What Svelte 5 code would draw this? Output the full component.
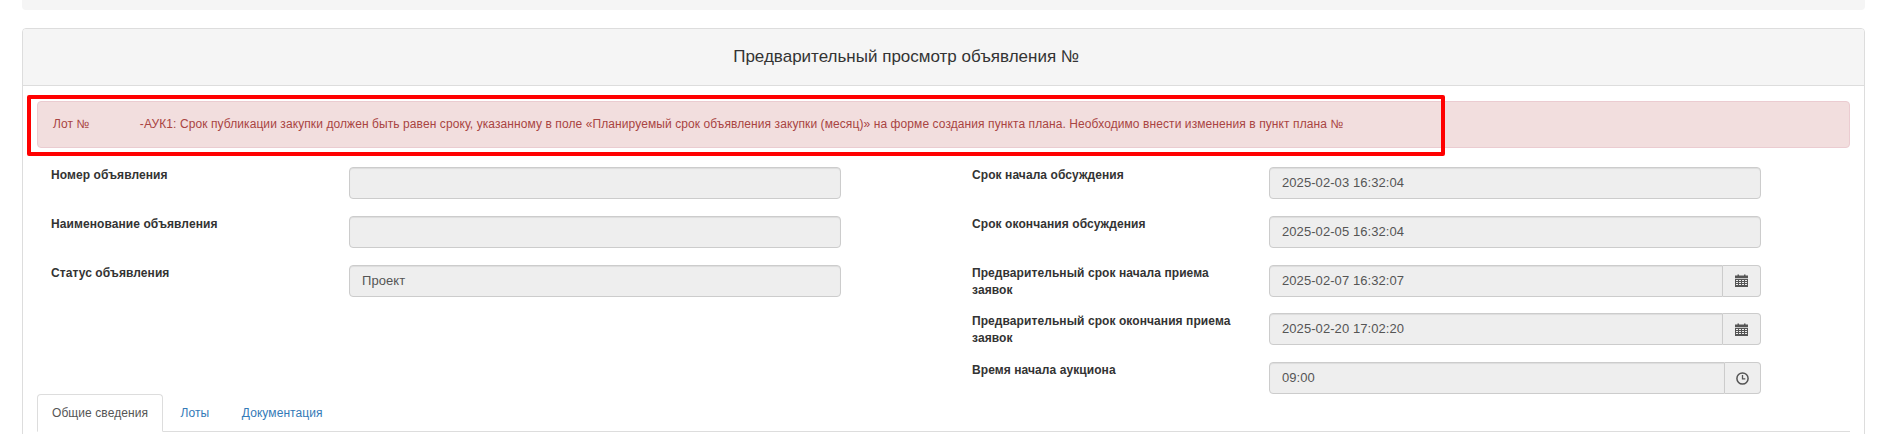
<script>
	const leftFields = [
		{ label: 'Номер объявления', value: '' },
		{ label: 'Наименование объявления', value: '' },
		{ label: 'Статус объявления', value: 'Проект' }
	]

	const rightFields = [
		{ label: 'Срок начала обсуждения', value: '2025-02-03 16:32:04' },
		{ label: 'Срок окончания обсуждения', value: '2025-02-05 16:32:04' },
		{ label: 'Предварительный срок начала приема заявок', value: '2025-02-07 16:32:07', addon: 'calendar' },
		{ label: 'Предварительный срок окончания приема заявок', value: '2025-02-20 17:02:20', addon: 'calendar' },
		{ label: 'Время начала аукциона', value: '09:00', addon: 'time' }
	]
</script>

{#snippet field(item)}
	<div class="field">
		<div class="field-label">{item.label}</div>
		<div class="input-group">
			<div class="input">{item.value}</div>
			{#if item.addon === 'calendar'}
				<span class="addon">
					<svg width="13" height="13" viewBox="0 0 13 13" aria-hidden="true">
						<path fill="#555" d="M0 1.5h2.5V.5h1.5v1h5v-1h1.5v1H13V4H0z" />
						<path fill="#555" fill-rule="evenodd" d="M0 4.8h13V13H0zM1 6v1h2V6zm3 0v1h2V6zm3 0v1h2V6zm3 0v1h2V6zM1 8v1h2V8zm3 0v1h2V8zm3 0v1h2V8zm3 0v1h2V8zM1 10v1h2v-1zm3 0v1h2v-1zm3 0v1h2v-1zm3 0v1h2v-1z" />
					</svg>
				</span>
			{:else if item.addon === 'time'}
				<span class="addon addon-time">
					<svg width="13" height="13" viewBox="0 0 13 13" aria-hidden="true">
						<circle cx="6.5" cy="6.5" r="5.6" fill="none" stroke="#555" stroke-width="1.5" />
						<path fill="none" stroke="#555" stroke-width="1.3" d="M6.5 3v3.8h2.8" />
					</svg>
				</span>
			{/if}
		</div>
	</div>
{/snippet}

<div class="page">
	<div class="well"></div>

	<section class="panel">
		<header class="panel-heading">
			<h3>Предварительный просмотр объявления № <span class="hidden-title"></span></h3>
		</header>

		<div class="panel-body">
			<div class="alert-wrap">
				<div class="alert">
					Лот № <span class="hidden-lot"></span>-АУК1: Срок публикации закупки должен быть равен сроку, указанному в поле «Планируемый срок объявления закупки (месяц)» на форме создания пункта плана. Необходимо внести изменения в пункт плана №
				</div>
				<div class="highlight"></div>
			</div>

			<div class="form">
				<div class="form-col">
					{#each leftFields as item}
						{@render field(item)}
					{/each}
				</div>
				<div class="form-col">
					{#each rightFields as item}
						{@render field(item)}
					{/each}
				</div>
			</div>

			<ul class="tabs">
				<li class="active"><span>Общие сведения</span></li>
				<li><span>Лоты</span></li>
				<li><span>Документация</span></li>
			</ul>
			<div class="tab-content"></div>
		</div>
	</section>
</div>

<style>
:global(body) {
	overflow: hidden;
	background: #fff;
}

.page {
	font-family: "Liberation Sans", Arial, sans-serif;
	font-size: 12px;
	line-height: 17px;
	color: #333;
	padding: 0 17px 0 22px;
	height: 434px;
	overflow: hidden;
}

.well {
	height: 9.5px;
	margin-bottom: 18.5px;
	background: #f5f5f5;
	border-radius: 0 0 4px 4px;
}

.panel {
	border: 1px solid #ddd;
	border-radius: 4px;
}

.panel-heading {
	height: 56px;
	display: flex;
	align-items: center;
	justify-content: center;
	background: #f5f5f5;
	border-bottom: 1px solid #ddd;
	border-radius: 3px 3px 0 0;
}

h3 {
	margin: 0;
	font-size: 17px;
	font-weight: 400;
	line-height: 18px;
	color: #333;
}

.hidden-title {
	display: inline-block;
	width: 70px;
}

.panel-body {
	padding: 15px 14px;
}

.alert-wrap {
	position: relative;
	margin-bottom: 19px;
}

.alert {
	padding: 14px 15px;
	background: #f2dede;
	border: 1px solid #ebccd1;
	border-radius: 4px;
	color: #a94442;
	letter-spacing: 0.087px;
}

.hidden-lot {
	display: inline-block;
	width: 47px;
}

.highlight {
	position: absolute;
	left: -10px;
	top: -6px;
	width: 1418px;
	height: 61px;
	box-sizing: border-box;
	border: 4px solid #f00;
	border-radius: 2px;
}

.form {
	display: grid;
	grid-template-columns: 921px 1fr;
	padding-left: 14px;
	margin-bottom: -16.75px;
}

.field {
	display: grid;
	grid-template-columns: 298px 492px;
	height: 32px;
	margin-bottom: 16.75px;
}

.form-col:last-child .field {
	grid-template-columns: 297px 492px;
}

.field-label {
	font-weight: 700;
	letter-spacing: 0.08px;
	padding-right: 20px;
}

.input-group {
	display: flex;
	height: 32px;
}

.input {
	flex: 1;
	padding: 0 12px;
	font-size: 13px;
	line-height: 30px;
	letter-spacing: 0.07px;
	color: #555;
	background: #eee;
	border: 1px solid #ccc;
	border-radius: 4px;
	box-shadow: inset 0 1px 1px rgba(0, 0, 0, 0.075);
}

.input-group:has(.addon) .input {
	border-radius: 4px 0 0 4px;
}

.addon {
	box-sizing: border-box;
	width: 38px;
	display: flex;
	align-items: center;
	justify-content: center;
	background: #eee;
	border: 1px solid #ccc;
	border-left: 0;
	border-radius: 0 4px 4px 0;
}

.addon-time {
	width: 36px;
}

.tabs {
	display: flex;
	gap: 2.5px;
	list-style: none;
	margin: 0;
	padding: 0;
	border-bottom: 1px solid #ddd;
	letter-spacing: 0.08px;
}

.tabs li {
	margin-bottom: -1px;
	padding: 9.5px 14px;
	border: 1px solid transparent;
	border-radius: 4px 4px 0 0;
	color: #337ab7;
}

.tabs li.active {
	color: #555;
	background: #fff;
	border-color: #ddd #ddd #fff;
}

.tab-content {
	height: 40px;
}
</style>
